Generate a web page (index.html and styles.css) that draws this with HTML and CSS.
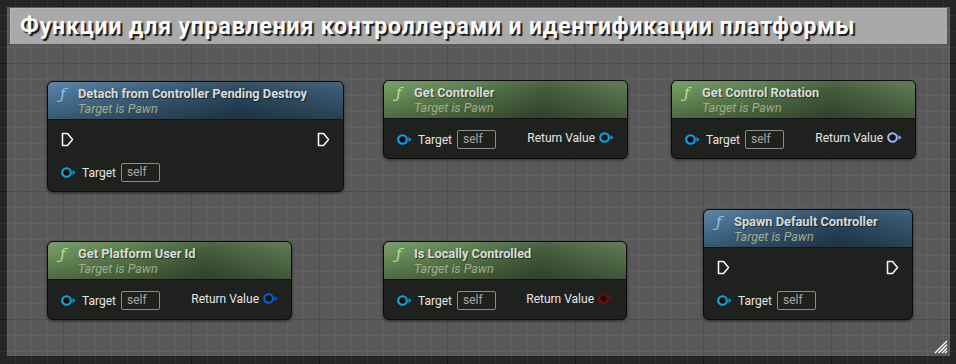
FILE: index.html
```html
<!DOCTYPE html>
<html lang="ru">
<head>
  <meta charset="UTF-8">
  <meta name="viewport" content="width=device-width, initial-scale=1.0">
  <title>Blueprint — контроллеры</title>
  <link rel="stylesheet" href="styles.css">
</head>
<body>
  <div class="graph">
    <div class="comment">
      <div class="comment-title">Функции для управления контроллерами и идентификации платформы</div>
      <svg class="grip" width="14" height="14" viewBox="0 0 14 14">
        <path d="M13 1 L1 13 M13 4.5 L4.5 13 M13 8 L8 13 M13 11 L11 13" stroke="#fff" stroke-width="1.3" fill="none"/>
      </svg>
    </div>

    <!-- Detach from Controller Pending Destroy -->
    <div class="node n-detach">
      <div class="node-head blue">
        <span class="fn">ƒ</span>
        <div class="titles">
          <div class="title">Detach from Controller Pending Destroy</div>
          <div class="sub">Target is Pawn</div>
        </div>
      </div>
      <div class="node-body">
        <div class="row exec-row">
          <svg class="exec" width="13" height="15" viewBox="0 0 13 15"><path d="M1.5 1.5 H6.5 L11.5 7.5 L6.5 13.5 H1.5 Z"/></svg>
          <svg class="exec" width="13" height="15" viewBox="0 0 13 15"><path d="M1.5 1.5 H6.5 L11.5 7.5 L6.5 13.5 H1.5 Z"/></svg>
        </div>
        <div class="row">
          <div class="pin">
            <svg class="data obj" width="15" height="11" viewBox="0 0 15 11"><circle cx="5.5" cy="5.5" r="4.3"/><path d="M11.5 3 L14.5 5.5 L11.5 8 Z"/></svg>
            <span>Target</span>
            <span class="self">self</span>
          </div>
        </div>
      </div>
    </div>

    <!-- Get Controller -->
    <div class="node n-getctrl">
      <div class="node-head green">
        <span class="fn">ƒ</span>
        <div class="titles">
          <div class="title">Get Controller</div>
          <div class="sub">Target is Pawn</div>
        </div>
      </div>
      <div class="node-body">
        <div class="row">
          <div class="pin">
            <svg class="data obj" width="15" height="11" viewBox="0 0 15 11"><circle cx="5.5" cy="5.5" r="4.3"/><path d="M11.5 3 L14.5 5.5 L11.5 8 Z"/></svg>
            <span>Target</span>
            <span class="self">self</span>
          </div>
          <div class="pin out">
            <span>Return Value</span>
            <svg class="data obj" width="15" height="11" viewBox="0 0 15 11"><circle cx="5.5" cy="5.5" r="4.3"/><path d="M11.5 3 L14.5 5.5 L11.5 8 Z"/></svg>
          </div>
        </div>
      </div>
    </div>

    <!-- Get Control Rotation -->
    <div class="node n-rotation">
      <div class="node-head green">
        <span class="fn">ƒ</span>
        <div class="titles">
          <div class="title">Get Control Rotation</div>
          <div class="sub">Target is Pawn</div>
        </div>
      </div>
      <div class="node-body">
        <div class="row">
          <div class="pin">
            <svg class="data obj" width="15" height="11" viewBox="0 0 15 11"><circle cx="5.5" cy="5.5" r="4.3"/><path d="M11.5 3 L14.5 5.5 L11.5 8 Z"/></svg>
            <span>Target</span>
            <span class="self">self</span>
          </div>
          <div class="pin out">
            <span>Return Value</span>
            <svg class="data rot" width="15" height="11" viewBox="0 0 15 11"><circle cx="5.5" cy="5.5" r="4.3"/><path d="M11.5 3 L14.5 5.5 L11.5 8 Z"/></svg>
          </div>
        </div>
      </div>
    </div>

    <!-- Get Platform User Id -->
    <div class="node n-platform">
      <div class="node-head green">
        <span class="fn">ƒ</span>
        <div class="titles">
          <div class="title">Get Platform User Id</div>
          <div class="sub">Target is Pawn</div>
        </div>
      </div>
      <div class="node-body">
        <div class="row">
          <div class="pin">
            <svg class="data obj" width="15" height="11" viewBox="0 0 15 11"><circle cx="5.5" cy="5.5" r="4.3"/><path d="M11.5 3 L14.5 5.5 L11.5 8 Z"/></svg>
            <span>Target</span>
            <span class="self">self</span>
          </div>
          <div class="pin out">
            <span>Return Value</span>
            <svg class="data struct" width="15" height="11" viewBox="0 0 15 11"><circle cx="5.5" cy="5.5" r="4.3"/><path d="M11.5 3 L14.5 5.5 L11.5 8 Z"/></svg>
          </div>
        </div>
      </div>
    </div>

    <!-- Is Locally Controlled -->
    <div class="node n-local">
      <div class="node-head green">
        <span class="fn">ƒ</span>
        <div class="titles">
          <div class="title">Is Locally Controlled</div>
          <div class="sub">Target is Pawn</div>
        </div>
      </div>
      <div class="node-body">
        <div class="row">
          <div class="pin">
            <svg class="data obj" width="15" height="11" viewBox="0 0 15 11"><circle cx="5.5" cy="5.5" r="4.3"/><path d="M11.5 3 L14.5 5.5 L11.5 8 Z"/></svg>
            <span>Target</span>
            <span class="self">self</span>
          </div>
          <div class="pin out">
            <span>Return Value</span>
            <svg class="data bool" width="15" height="11" viewBox="0 0 15 11"><circle cx="5.5" cy="5.5" r="4.3"/><path d="M11.5 3 L14.5 5.5 L11.5 8 Z"/></svg>
          </div>
        </div>
      </div>
    </div>

    <!-- Spawn Default Controller -->
    <div class="node n-spawn">
      <div class="node-head blue">
        <span class="fn">ƒ</span>
        <div class="titles">
          <div class="title">Spawn Default Controller</div>
          <div class="sub">Target is Pawn</div>
        </div>
      </div>
      <div class="node-body">
        <div class="row exec-row">
          <svg class="exec" width="13" height="15" viewBox="0 0 13 15"><path d="M1.5 1.5 H6.5 L11.5 7.5 L6.5 13.5 H1.5 Z"/></svg>
          <svg class="exec" width="13" height="15" viewBox="0 0 13 15"><path d="M1.5 1.5 H6.5 L11.5 7.5 L6.5 13.5 H1.5 Z"/></svg>
        </div>
        <div class="row">
          <div class="pin">
            <svg class="data obj" width="15" height="11" viewBox="0 0 15 11"><circle cx="5.5" cy="5.5" r="4.3"/><path d="M11.5 3 L14.5 5.5 L11.5 8 Z"/></svg>
            <span>Target</span>
            <span class="self">self</span>
          </div>
        </div>
      </div>
    </div>
  </div>
</body>
</html>
```

FILE: styles.css
```css
body {
  margin: 0;
  padding: 0;
  font-family: 'Roboto', 'Liberation Sans', sans-serif;
  background-color: #262626;
}

.graph {
  position: relative;
  width: 956px;
  height: 364px;
  overflow: hidden;
  background-color: #262626;
  background-image:
    linear-gradient(to right, #171717 1px, transparent 1px),
    linear-gradient(to bottom, #171717 1px, transparent 1px),
    linear-gradient(to right, #303030 1px, transparent 1px),
    linear-gradient(to bottom, #303030 1px, transparent 1px);
  background-size: 128px 128px, 128px 128px, 16px 16px, 16px 16px;
  background-position: 63px 63px, 63px 63px, 15px 15px, 15px 15px;
}

/* comment box */
.comment {
  position: absolute;
  left: 7px;
  top: 7px;
  width: 943px;
  height: 349px;
  background: rgba(255, 255, 255, 0.24);
  box-shadow: inset 0 0 0 1px rgba(255, 255, 255, 0.04);
}

.comment-title {
  margin: 1px 3px 0 3px;
  height: 36px;
  box-sizing: border-box;
  padding-left: 9px;
  background: #a9a9a9;
  border-top: 1px solid #b6b6b6;
  border-left: 1px solid #b6b6b6;
  color: #fafafa;
  font-size: 23px;
  font-weight: bold;
  letter-spacing: 0.85px;
  line-height: 35px;
  white-space: nowrap;
  text-shadow: 2px 2px 1px rgba(0, 0, 0, 0.85);
}

.grip {
  position: absolute;
  right: 2px;
  bottom: 2px;
}

/* nodes */
.node {
  position: absolute;
  box-sizing: border-box;
  background: #1f211f;
  border: 1px solid #0c0c0c;
  border-radius: 6px;
  box-shadow: 0 1px 3px rgba(0, 0, 0, 0.55);
  overflow: hidden;
}

.n-detach { left: 47px; top: 81px; width: 297px; }
.n-getctrl { left: 383px; top: 80px; width: 245px; }
.n-rotation { left: 671px; top: 80px; width: 245px; }
.n-platform { left: 47px; top: 241px; width: 245px; }
.n-local { left: 383px; top: 241px; width: 244px; }
.n-spawn { left: 703px; top: 209px; width: 210px; }

.node-head {
  display: flex;
  align-items: flex-start;
  height: 38px;
  box-sizing: border-box;
  padding: 4px 8px 0 12px;
  border-bottom: 1px solid #151515;
}

.node-head.blue {
  background:
    linear-gradient(to bottom, rgba(255, 255, 255, 0.08) 0%, rgba(0, 0, 0, 0) 25%, rgba(0, 0, 0, 0.28) 100%),
    linear-gradient(100deg, #527c9e 0%, #3a5d79 35%, #2a465c 65%, #3a5a74 100%);
}

.node-head.green {
  background:
    linear-gradient(to bottom, rgba(255, 255, 255, 0.08) 0%, rgba(0, 0, 0, 0) 25%, rgba(0, 0, 0, 0.28) 100%),
    linear-gradient(100deg, #71955f 0%, #577a4b 35%, #42593b 65%, #5a7650 100%);
}

.fn {
  width: 18px;
  font-family: 'DejaVu Serif', 'Liberation Serif', serif;
  font-style: italic;
  font-size: 15px;
  line-height: 17px;
}

.blue .fn { color: #8cc4ee; }
.green .fn { color: #aee49a; }

.titles {
  padding-left: 0;
}

.title {
  color: #dadada;
  font-size: 12.8px;
  font-weight: bold;
  line-height: 15px;
  white-space: nowrap;
  text-shadow: 1px 1px 1px rgba(0, 0, 0, 0.5);
}

.sub {
  color: #a3ab8e;
  font-size: 12.5px;
  font-style: italic;
  line-height: 16px;
}

.node-body {
  display: flex;
  flex-direction: column;
  gap: 16px;
  padding: 11px 13px 9px 13px;
}

.row {
  display: flex;
  align-items: center;
  justify-content: space-between;
  height: 19px;
}

.exec-row {
  height: 16px;
}

.exec path {
  fill: none;
  stroke: #f2f2f2;
  stroke-width: 1.6;
  stroke-linejoin: round;
}

.pin {
  display: flex;
  align-items: center;
  gap: 6px;
  color: #e6e6e6;
  font-size: 12px;
}

.pin.out {
  gap: 4px;
  margin-top: -4px;
}

.self {
  box-sizing: border-box;
  width: 39px;
  height: 19px;
  margin-left: -1px;
  padding-left: 5px;
  border: 1px solid #8c8c8c;
  border-radius: 2px;
  color: #a6a6a6;
  line-height: 17px;
}

.data circle {
  fill: #121212;
  stroke-width: 2.1;
}

.obj circle { stroke: #14a2ea; }
.obj path { fill: #14a2ea; }
.rot circle { stroke: #9db2f4; }
.rot path { fill: #9db2f4; }
.struct circle { stroke: #0062d6; }
.struct path { fill: #0062d6; }
.bool circle { stroke: #7a0a0a; }
.bool path { fill: #7a0a0a; }
```
